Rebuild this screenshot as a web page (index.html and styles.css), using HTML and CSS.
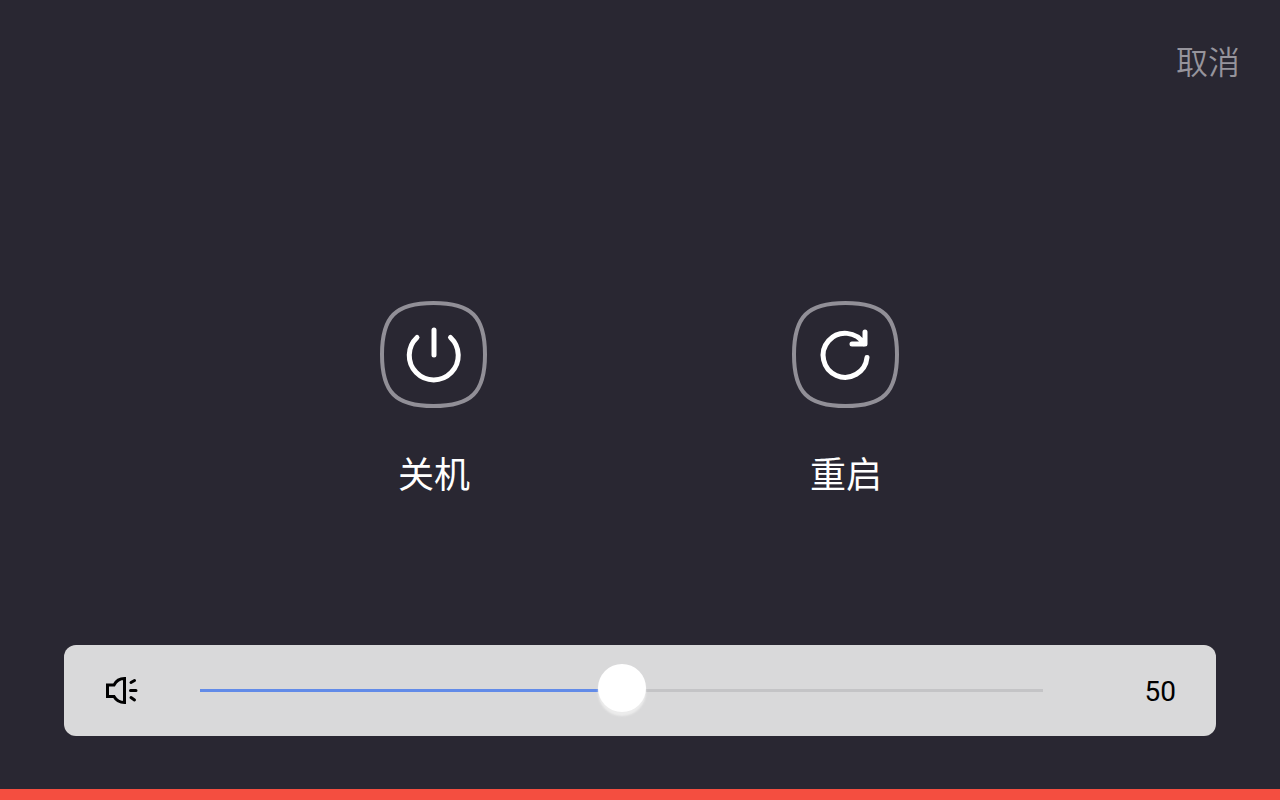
FILE: index.html
```html
<!DOCTYPE html>
<html lang="zh-CN">
<head>
  <meta charset="UTF-8">
  <meta name="viewport" content="width=device-width, initial-scale=1.0">
  <title>电源菜单</title>
  <link rel="stylesheet" href="styles.css">
</head>
<body>
  <header class="top-bar">
    <button type="button" class="cancel-btn">取消</button>
  </header>

  <main class="actions">
    <button type="button" class="action">
      <svg class="action-icon" viewBox="0 0 108 108" fill="none" aria-hidden="true">
        <path class="frame" d="M53.5 2C75 2 86 6 93.500 13.500S105 32 105 53.500S101 86 93.500 93.500S75 105 53.500 105S21 101 13.500 93.500S2 75 2 53.500S6 21 13.500 13.500S32 2 53.500 2Z"/>
        <path class="glyph" d="M54 29V54M37 36.500A24.500 24.500 0 1 0 70.500 36.500"/>
      </svg>
      <span>关机</span>
    </button>
    <button type="button" class="action">
      <svg class="action-icon" viewBox="0 0 108 108" fill="none" aria-hidden="true">
        <path class="frame" d="M53.5 2C75 2 86 6 93.500 13.500S105 32 105 53.500S101 86 93.500 93.500S75 105 53.500 105S21 101 13.500 93.500S2 75 2 53.500S6 21 13.500 13.500S32 2 53.500 2Z"/>
        <path class="glyph" d="M75 56.500A22 22 0 1 1 72 43M73 31V43H60"/>
      </svg>
      <span>重启</span>
    </button>
  </main>

  <section class="volume">
    <svg class="volume-icon" viewBox="0 0 36 36" fill="none" aria-hidden="true">
      <path d="M3.500 13H10C12 9 15.500 6.500 20.500 6.500V30.500C15.500 30.500 12 28 10 24.500H3.500Z"/>
      <path d="M27 10.500L30.500 8.500M26.500 18.500H32M27 25.500L30.500 28" stroke-linecap="round"/>
    </svg>
    <input type="range" id="volume" class="volume-slider" min="0" max="100" value="50" style="--value: 50%" aria-label="音量">
    <output id="volumeValue" class="volume-value" for="volume">50</output>
  </section>

  <div class="bottom-strip"></div>

  <script>
    const slider = document.getElementById('volume');
    const output = document.getElementById('volumeValue');

    slider.addEventListener('input', () => {
      output.textContent = slider.value;
      slider.style.setProperty('--value', slider.value + '%');
    });
  </script>
</body>
</html>
```
FILE: styles.css
```css
* {
  box-sizing: border-box;
}
body {
  margin: 0;
  min-height: 100vh;
  display: flex;
  flex-direction: column;
  background-color: #292732;
  color: #fff;
  font-family: Roboto, "Noto Sans CJK SC", sans-serif;
}
button {
  padding: 0;
  border: none;
  background: none;
  color: inherit;
  font-family: inherit;
  cursor: pointer;
}
.top-bar {
  display: flex;
  justify-content: flex-end;
  padding: 39px 40px 0;
}
.cancel-btn {
  color: #96949c;
  font-size: 32px;
  font-weight: 350;
  line-height: 48px;
}
.actions {
  flex: 1;
  display: flex;
  justify-content: center;
  align-items: center;
  gap: 304px;
  padding-top: 71px;
}
.action {
  display: flex;
  flex-direction: column;
  align-items: center;
  gap: 40px;
  font-size: 36px;
  line-height: 54px;
}
.action-icon {
  width: 108px;
  height: 108px;
}
.frame {
  stroke: #918f97;
  stroke-width: 4;
}
.glyph {
  stroke: #fff;
  stroke-width: 5;
  stroke-linecap: round;
  stroke-linejoin: round;
}
.volume {
  display: flex;
  align-items: center;
  gap: 60px;
  margin: 0 5% 53px;
  padding: 21px 40px 22px;
  border-radius: 12px;
  background-color: #d9d9da;
  color: #000;
}
.volume-icon {
  flex: none;
  width: 36px;
  height: 36px;
  stroke: #000;
  stroke-width: 3;
}
.volume-slider {
  flex: 1;
  min-width: 0;
  height: 48px;
  margin: 0;
  appearance: none;
  background: none;
  cursor: pointer;
}
.volume-slider::-webkit-slider-runnable-track {
  height: 3px;
  background: linear-gradient(to right, #628be8 var(--value), #c4c4c6 var(--value));
}
.volume-slider::-webkit-slider-thumb {
  appearance: none;
  width: 48px;
  height: 48px;
  margin-top: -25px;
  border-radius: 50%;
  background-color: #fff;
  box-shadow: 0 4px 2px #ececec;
}
.volume-value {
  width: 73px;
  padding-top: 2px;
  font-size: 28px;
  text-align: right;
}
.bottom-strip {
  height: 11px;
  background-color: #f44e40;
}
```
